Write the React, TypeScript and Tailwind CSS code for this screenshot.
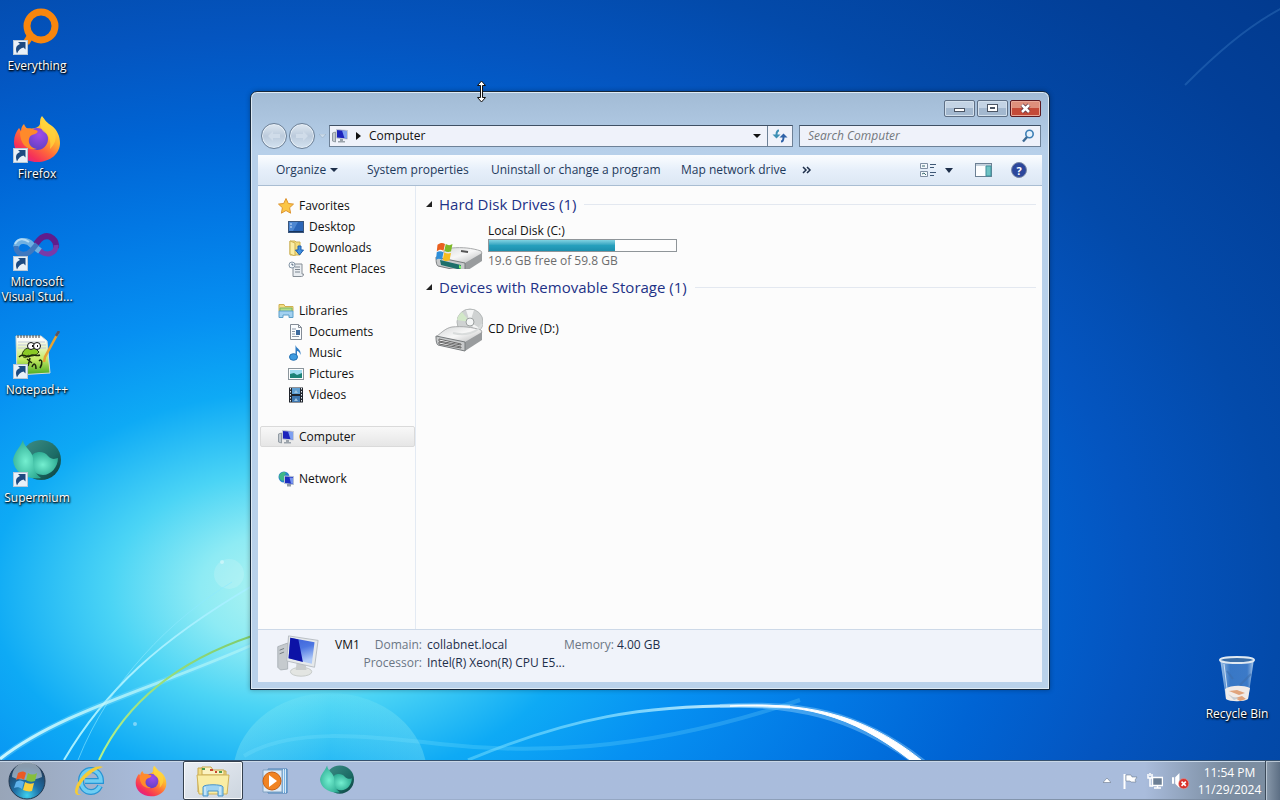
import type { ReactNode } from "react";

const Wallpaper = () => (
  <svg
    className="absolute inset-0 h-full w-full"
    viewBox="0 0 1280 760"
    preserveAspectRatio="xMidYMid slice"
    aria-hidden="true"
  >
    <defs>
      <radialGradient id="sky" gradientUnits="userSpaceOnUse" cx="0" cy="0" r="1" gradientTransform="translate(290 590) scale(1500 990)">
        <stop offset="0" stopColor="#b4f5f0" />
        <stop offset="0.06" stopColor="#8eebf4" />
        <stop offset="0.12" stopColor="#4bd4f5" />
        <stop offset="0.2" stopColor="#0eaaf5" />
        <stop offset="0.28" stopColor="#0690f2" />
        <stop offset="0.38" stopColor="#0278e4" />
        <stop offset="0.47" stopColor="#0064d4" />
        <stop offset="0.56" stopColor="#0455c0" />
        <stop offset="0.66" stopColor="#034aaa" />
        <stop offset="0.8" stopColor="#023f98" />
        <stop offset="1" stopColor="#023584" />
      </radialGradient>
      <linearGradient id="arcFade" x1="0" x2="1">
        <stop offset="0" stopColor="#6fdcff" stopOpacity="0.5" />
        <stop offset="0.5" stopColor="#8fe0ff" stopOpacity="0.8" />
        <stop offset="1" stopColor="#ffffff" />
      </linearGradient>
      <linearGradient id="stemFade" x1="0" x2="1">
        <stop offset="0" stopColor="#c9f6ff" />
        <stop offset="1" stopColor="#c9fff5" stopOpacity="0.4" />
      </linearGradient>
      <linearGradient id="green" x1="0" y1="1" x2="1" y2="0">
        <stop offset="0" stopColor="#b5f28a" />
        <stop offset="1" stopColor="#7fcb6c" />
      </linearGradient>
      <linearGradient id="bubble" x1="0" x2="1">
        <stop offset="0" stopColor="#b5faf2" stopOpacity="0.25" />
        <stop offset="0.5" stopColor="#b5faf2" stopOpacity="0.05" />
        <stop offset="1" stopColor="#b5faf2" stopOpacity="0.25" />
      </linearGradient>
    </defs>
    <rect width="1280" height="760" fill="url(#sky)" />
    <ellipse cx="330" cy="775" rx="97" ry="82" fill="url(#bubble)" />
    <circle cx="229" cy="574" r="15" fill="#fff" opacity="0.15" />
    <circle cx="222" cy="562" r="2" fill="#fff" opacity="0.4" />
    <circle cx="135" cy="724" r="2" fill="#fff" opacity="0.4" />
    <path d="M64 760C105 690 160 640 252 586" fill="none" stroke="#a6f0ff" strokeWidth="2" />
    <path d="M78 760C110 680 170 620 232 582" fill="none" stroke="#8deaff" strokeWidth="1" opacity="0.6" />
    <path d="M0 759C60 712 150 690 252 645" fill="none" stroke="#7fdfff" strokeWidth="6" opacity="0.35" />
    <path d="M0 759C60 712 150 690 252 645" fill="none" stroke="url(#stemFade)" strokeWidth="3" />
    <path d="M99 760C125 705 175 662 252 636" fill="none" stroke="url(#green)" strokeWidth="2" />
    <path d="M244 756C290 728 360 735 440 744S640 755 800 700" fill="none" stroke="#8ae6ff" strokeWidth="4" opacity="0.22" />
    <path d="M468 760C560 722 640 700 790 707" fill="none" stroke="url(#arcFade)" strokeWidth="3" />
    <path d="M720 706C790 704 850 715 914 762L922 760C860 712 800 700 720 706" fill="#9fdcff" stroke="#9fdcff" strokeWidth="4" opacity="0.4" />
    <path d="M730 706C800 703 850 713 910 760L921 760C860 711 800 702 730 706" fill="#fff" stroke="#fff" />
    <path d="M1185 85C1215 55 1245 28 1282 8" fill="none" stroke="#5aa0e0" strokeWidth="2" opacity="0.25" />
  </svg>
);

const ShortcutArrow = () => (
  <g>
    <rect x="0.5" y="33.5" width="14" height="14" fill="#e9f1f8" stroke="#b9c8d6" />
    <path d="M4 46.500c-2-5-1-8 3-9.500L5 35h7.500v7.500l-2-2c-3 .5-5 2.500-6.500 6z" fill="#1d4a80" />
  </g>
);

const EverythingArt = () => (
  <>
    <circle cx="28" cy="19" r="14" fill="none" stroke="#f8860d" strokeWidth="7" />
    <path d="M18 28l-5 8" stroke="#f8860d" strokeWidth="7" />
  </>
);

const FirefoxArt = () => (
  <>
    <defs>
      <linearGradient id="ffBody" x1="0.85" y1="0.05" x2="0.2" y2="0.95">
        <stop offset="0.05" stopColor="#ffe64a" />
        <stop offset="0.35" stopColor="#ffb12e" />
        <stop offset="0.6" stopColor="#ff6a3a" />
        <stop offset="0.85" stopColor="#f5305a" />
        <stop offset="1" stopColor="#e0218a" />
      </linearGradient>
      <radialGradient id="ffCore" cx="0.6" cy="0.3" r="0.8">
        <stop offset="0" stopColor="#a04be8" />
        <stop offset="1" stopColor="#5b3fc0" />
      </radialGradient>
    </defs>
    <path d="M29 1c3 4 5 7 10 10 5 4 8 10 8 17 0 11-10 19-23 19S1 38 1 27c0-6 2-10 5-14 1 1 1 2 2 3 0-3 1-5 3-7 1 3 3 5 6 5 4-1 9-1 10-5 0-3 0-6 2-8z" fill="url(#ffBody)" />
    <circle cx="24" cy="24" r="11" fill="url(#ffCore)" />
    <path d="M7 17c4-4 10-5 15-2 4 0 3 3 0 4-4 1-5 2-6 5-1 5 2 9 8 10-9 2-17-4-17-17z" fill="#ff8a2b" />
    <path d="M30 3c4 6 9 9 12 15 2 7-1 12-5 16 1-7 0-13-6-17-4-3-4-9-1-14z" fill="#ffd43c" opacity="0.75" />
  </>
);

const VisualStudioArt = () => (
  <g transform="translate(0 7)">
    <path d="M20 18c4-4 5-9 10-11 7-3 14 3 13 11" fill="none" stroke="#5f1d8c" strokeWidth="6" />
    <path d="M43 15c1 9-10 12-17 5" fill="none" stroke="#7a3aa8" strokeWidth="5" />
    <path d="M3 17c1-7 11-8 16-2l8 6" fill="none" stroke="#6fb0e2" strokeWidth="6" />
    <path d="M3 16c0 9 10 11 16 4l5-6" fill="none" stroke="#3f78bf" strokeWidth="5" />
    <path d="M2 14c3-6 9-6 14-2" fill="none" stroke="#b5dcf4" strokeWidth="2" />
  </g>
);

const NotepadArt = () => (
  <>
    <defs>
      <linearGradient id="npPage" x1="0" y1="0" x2="0" y2="1">
        <stop offset="0.1" stopColor="#fdfdfa" />
        <stop offset="0.6" stopColor="#c5ea62" />
        <stop offset="1" stopColor="#46a820" />
      </linearGradient>
    </defs>
    <path d="M3 5h25l6 5 3 32-33 2z" fill="url(#npPage)" stroke="#d9ddd6" />
    <path d="M5 4v3M8 4v3M11 4v3M14 4v3M17 4v3M20 4v3M23 4v3M26 4v3" stroke="#444" />
    <path d="M5 11h27M5 14h28M5 17h28" stroke="#c3c9d8" strokeWidth="1" />
    <path d="M9 24c1-7 8-9 14-6l3 3c-3 4-8 5-11 3-1 3-4 4-6 0z" fill="#8ac926" stroke="#263a0c" strokeWidth="1" />
    <circle cx="18" cy="15" r="3.500" fill="#fff" stroke="#111" />
    <circle cx="24" cy="15" r="3.500" fill="#fff" stroke="#111" />
    <path d="M19 15h1M24 15h1" stroke="#111" strokeWidth="2" />
    <path d="M6 26c5-5 8 2 11-1s6 1 10-1M14 28l5 4m-2-5l-2 8M19 36c2-5 4-3 4 2m3-8c3-3 4 2 1 7" fill="none" stroke="#1c280b" strokeWidth="1.500" />
    <path d="M45 2L32 26l-1 5" stroke="#e8a332" strokeWidth="2.500" fill="none" />
    <path d="M46 0l-3 5" stroke="#5b5560" strokeWidth="2.500" />
  </>
);

const SupermiumArt = () => (
  <>
    <defs>
      <radialGradient id="smBall" cx="0.45" cy="0.55" r="0.6">
        <stop offset="0" stopColor="#74efd0" />
        <stop offset="1" stopColor="#2aa890" />
      </radialGradient>
      <linearGradient id="smRing" x1="0" y1="0" x2="1" y2="1">
        <stop offset="0" stopColor="#3f8f88" />
        <stop offset="0.6" stopColor="#1c6c66" />
        <stop offset="1" stopColor="#0b3b3a" />
      </linearGradient>
    </defs>
    <circle cx="28" cy="21" r="20" fill="url(#smRing)" />
    <path d="M18 19c1-7 13-8 17-2 4 4 7 3 10 2 0 9-7 17-15 17-10 0-14-9-12-17z" fill="url(#smBall)" />
    <path d="M10 1c1 8 9 10 10 18 0 8 1 15 8 20C13 41 1 33 0 21c1-8 7-12 10-20z" fill="url(#smBall)" />
  </>
);

const RecycleBinArt = () => (
  <>
    <defs>
      <linearGradient id="binGlass" x1="0" x2="1">
        <stop offset="0" stopColor="#c3dcf2" stopOpacity="0.85" />
        <stop offset="0.3" stopColor="#5c94d4" stopOpacity="0.6" />
        <stop offset="0.8" stopColor="#6a9fdc" stopOpacity="0.55" />
        <stop offset="1" stopColor="#d5e8f8" stopOpacity="0.85" />
      </linearGradient>
    </defs>
    <path d="M7 4l6 40c4 3 18 3 22 0l6-40z" fill="url(#binGlass)" />
    <path d="M12 34c6-4 18-4 25-1l-2 11c-4 3-18 3-22 0z" fill="#f1ebe8" />
    <path d="M16 36l8-1 8 3-6 2zM22 43l7-2 4 3-6 2z" fill="#e0a37c" />
    <path d="M15 39l5 3 6 1-5 2z" fill="#c7ccd2" />
    <ellipse cx="24" cy="5" rx="17" ry="3" fill="#3a6da6" stroke="#dfe9f2" strokeWidth="2" />
    <path d="M38 19L27 30M14 16l6 8" stroke="#3d6fae" opacity="0.6" strokeWidth="2" />
    <path d="M11 9l4 33" stroke="#e6f1fb" opacity="0.8" />
  </>
);

const MonitorArt = () => (
  <>
    <defs>
      <linearGradient id="screen" x1="0" y1="0" x2="0.3" y2="1">
        <stop offset="0" stopColor="#3c5fd8" />
        <stop offset="0.5" stopColor="#4c76e2" />
        <stop offset="1" stopColor="#b0caf7" />
      </linearGradient>
    </defs>
    <path d="M2 13l11-4v29l-8 1-3-3z" fill="#c5cace" stroke="#a9b0b5" />
    <path d="M4 17l5-2M4 21l5-2" stroke="#6b7379" />
    <ellipse cx="28" cy="41" rx="12" ry="5" fill="#e3e5e2" stroke="#c4c8c6" />
    <path d="M23 31h10l1 8H22z" fill="#c9cccc" />
    <path d="M14 1l33 5-4 30-31-7z" fill="#e6e9eb" stroke="#b4babf" />
    <path d="M16 3l27 5-3 24-26-6z" fill="url(#screen)" />
    <path d="M16 3l9 2 5 25-16-4z" fill="#0c12a6" />
  </>
);

const DriveBody = () => (
  <>
    <defs>
      <linearGradient id="driveTop" x1="0" y1="0" x2="1" y2="1">
        <stop offset="0" stopColor="#d4d6d7" />
        <stop offset="0.5" stopColor="#f7f7f7" />
        <stop offset="1" stopColor="#b2b4b5" />
      </linearGradient>
    </defs>
    <path d="M1 32c6-5 10-9 16-10 10-1 20 0 29 3 1 1 1 3 0 4L30 38z" fill="url(#driveTop)" stroke="#a9abac" />
    <path d="M30 37l17-10v8L30 46z" fill="#999c9e" />
    <path d="M1 31l29 6v9L3 40c-2-1-2-7-2-9z" fill="#c8cacb" stroke="#777b7d" />
  </>
);

const HardDiskArt = () => (
  <>
    <DriveBody />
    <path d="M5 34l21 5v5L6 39z" fill="#1d6f6a" />
    <path d="M24 39l2 1v3l-2-1z" fill="#7cf06a" />
    <path d="M26 25l7 1" stroke="#555" strokeWidth="2" />
    <g transform="translate(1 12) scale(.75)">
      <path d="M2 9c4-3 7-3 10-1l-2 9c-3-2-6-2-9 1z" fill="#e9601f" />
      <path d="M13 8c3 2 6 2 9 0l-2 10c-3 1-6 1-9-1z" fill="#7eb928" />
      <path d="M1 19c3-2 6-2 9 0l-2 10c-3-2-5-2-8 0z" fill="#2f8fd8" />
      <path d="M11 19c3 2 6 2 9 1l-2 10c-4 1-6 1-9-1z" fill="#f6bc20" />
    </g>
  </>
);

const CdDriveArt = () => (
  <>
    <circle cx="35" cy="17" r="13" fill="#cfd2d2" stroke="#b4b8b8" />
    <path d="M35 17L27 7a13 13 0 0 0-5 8z" fill="#d2e8c8" />
    <path d="M35 17L31 5h8zM35 17l6 11 5-4z" fill="#f3f4f4" />
    <circle cx="35" cy="17" r="4" fill="#f4f6f6" stroke="#9da1a1" />
    <DriveBody />
    <path d="M4 34l22 5v1L4 36zM4 37l22 5v1L4 39z" fill="#fff" stroke="#666" strokeWidth="1" />
    <path d="M18 28c12 3 25 0 29-9" fill="none" stroke="#d9dcdc" strokeWidth="2" />
  </>
);

type IconProps = { size?: number; box?: string; children: ReactNode };

const Icon = ({ size = 16, box = "0 0 16 16", children }: IconProps) => (
  <svg width={size} height={size} viewBox={box} aria-hidden="true" className="shrink-0">
    {children}
  </svg>
);

const smallIcons: Record<string, ReactNode> = {
  Favorites: (
    <path d="M8 .5l2.300 5 5.200.6-3.900 3.600 1 5.500L8 12.500l-4.600 2.700 1-5.500L.5 6.100l5.200-.6z" fill="#fbc646" stroke="#dd9430" />
  ),
  Desktop: (
    <>
      <rect x="0.5" y="2.5" width="15" height="11" fill="#2b66b8" stroke="#3a567c" />
      <path d="M1 3h9L5 12H1z" fill="#5c95dc" opacity="0.7" />
      <path d="M2 5h2M2 8h2" stroke="#cfe3fa" />
      <path d="M1 12.500h14" stroke="#16345e" />
    </>
  ),
  Downloads: (
    <>
      <path d="M2 1h5l1 1h4v13H2z" fill="#f2dc7c" stroke="#cdb154" />
      <path d="M2 1l5 2v13l-5-2z" fill="#fbeea6" stroke="#cdb154" />
      <path d="M10 6h3v4h2.500l-4 5-4-5H10z" fill="#3f8fe0" stroke="#1f5fae" />
    </>
  ),
  "Recent Places": (
    <>
      <path d="M4 3h10v10h1.500c0 2-1 2.500-2 2.500H5V6H1.500C1 4 2 3 4 3z" fill="#e9edf1" stroke="#868e96" />
      <path d="M7 6h5M7 8.500h5M7 11h5" stroke="#7d8791" />
      <circle cx="4" cy="4" r="3" fill="#f4f8fb" stroke="#8798a8" />
      <path d="M4 2.500V4h1.500" fill="none" stroke="#4b6176" />
    </>
  ),
  Libraries: (
    <>
      <path d="M1 1.500h5l1 2h8V8H1z" fill="#f3dd83" stroke="#cfb050" />
      <path d="M2 5h12v4H2z" fill="#b4df8a" stroke="#7fb563" />
      <path d="M1 8h14v6.500h-4V12H5v2.500H1z" fill="#a3d1f0" stroke="#5c9fc9" />
    </>
  ),
  Documents: (
    <>
      <path d="M2.500.5h8l3 3v12h-11z" fill="#fafcfe" stroke="#848c96" />
      <path d="M10.500.5v3h3" fill="none" stroke="#848c96" />
      <path d="M4 5h4M4 7.500h3M4 10h3M4 12.500h7" stroke="#8b98a8" />
      <rect x="8" y="6" width="4" height="5" fill="#3c6a9e" />
    </>
  ),
  Music: (
    <>
      <path d="M7.500 0c1 4 6 4 5 10-1-3-2-4-3.500-4v6H7.500z" fill="#2f7cc4" />
      <ellipse cx="5.500" cy="12" rx="4" ry="3.300" fill="#3c9ae0" stroke="#2270b2" />
    </>
  ),
  Pictures: (
    <>
      <rect x="0.5" y="2.500" width="15" height="11" fill="#fbfdfd" stroke="#8b959c" />
      <rect x="2" y="4" width="12" height="8" fill="#9fdcf0" />
      <path d="M2 8l4-1 3 2 5-2v5H2z" fill="#1d8377" />
    </>
  ),
  Videos: (
    <>
      <rect x="1" y="0.500" width="14" height="15" fill="#20252c" />
      <path d="M2.500 1v14M13.500 1v14" stroke="#e3e9ee" strokeWidth="1" strokeDasharray="1.500 1.500" />
      <rect x="4" y="1" width="8" height="6" fill="#5f9fd2" />
      <rect x="4" y="9" width="8" height="6" fill="#3e77b0" />
      <path d="M6 6l2-3 2 3M6 14l2-3 2 3" fill="#9cc4e0" />
    </>
  ),
  Computer: (
    <>
      <path d="M.5 5l3-1v10l-3-1z" fill="#c3cad0" stroke="#929ba3" />
      <path d="M4.500 1.500l11 1v8.500l-11-1z" fill="#1c23bc" stroke="#c6ccd4" />
      <path d="M10 2.500l5 .5v7.500l-2.500-.3z" fill="#7d9ff0" />
      <path d="M8 11h3v2h2v1.500H6V13h2z" fill="#9ba3ab" />
    </>
  ),
  Network: (
    <>
      <circle cx="6" cy="6" r="5.500" fill="#2583c8" />
      <path d="M2 3c3-3 5-2 6-1L6 5l2 2-3 3C2 9 0 6 2 3z" fill="#3fb787" />
      <path d="M6.500 5l9 .5v8l-9-1z" fill="#1c2dc0" stroke="#b9c3d2" />
      <path d="M11.500 6.500l3.500.2v6l-2-.2z" fill="#7795ee" />
      <path d="M9 13h4v2.500H9z" fill="#8f9aa8" />
    </>
  ),
};

const desktopIcons = [
  { name: "Everything", lines: ["Everything"], art: <EverythingArt /> },
  { name: "Firefox", lines: ["Firefox"], art: <FirefoxArt /> },
  { name: "Visual Studio", lines: ["Microsoft", "Visual Stud..."], art: <VisualStudioArt /> },
  { name: "Notepad++", lines: ["Notepad++"], art: <NotepadArt /> },
  { name: "Supermium", lines: ["Supermium"], art: <SupermiumArt /> },
];

const navGroups = [
  { title: "Favorites", items: ["Desktop", "Downloads", "Recent Places"] },
  { title: "Libraries", items: ["Documents", "Music", "Pictures", "Videos"] },
  { title: "Computer", items: [] },
  { title: "Network", items: [] },
];

function DesktopIcon({ lines, art, shortcut = true }: { lines: string[]; art: ReactNode; shortcut?: boolean }) {
  return (
    <button className="flex h-[108px] w-[74px] flex-col items-center pt-[7px] text-white">
      <Icon size={48} box="0 0 48 48">
        {art}
        {shortcut && <ShortcutArrow />}
      </Icon>
      <span className="mt-[3px] flex flex-col items-center whitespace-nowrap text-[12px] leading-[15px] [text-shadow:1px_1px_2px_#000,0_1px_2px_#000]">
        {lines.map((line) => (
          <span key={line}>{line}</span>
        ))}
      </span>
    </button>
  );
}

const captionButton =
  "flex h-[17px] w-[31px] items-center justify-center rounded-[2px] border border-[#5f7086] bg-linear-to-b from-[#c3d3e4] from-50% to-[#a3b8cf] to-50% shadow-[inset_0_0_0_1px_#d3e0ec]";

function TitleBar() {
  return (
    <div className="flex justify-end gap-[2px] pr-[1px]">
      <button className={captionButton} aria-label="Minimize">
        <svg width="13" height="11" viewBox="0 0 13 11">
          <rect x="1.500" y="5.500" width="10" height="3" fill="#fff" stroke="#4b5564" />
        </svg>
      </button>
      <button className={captionButton} aria-label="Maximize">
        <svg width="13" height="11" viewBox="0 0 13 11">
          <rect x="1.500" y="1.500" width="10" height="7" fill="#fff" stroke="#4b5564" />
          <rect x="4.500" y="4.500" width="4" height="1" fill="#9fb3c8" stroke="#4b5564" />
        </svg>
      </button>
      <button
        className="flex h-[17px] w-[31px] items-center justify-center rounded-[2px] border border-[#5c1a22] bg-linear-to-b from-[#de8f7c] from-50% to-[#c44a38] to-50% shadow-[inset_0_0_0_1px_#e8a898]"
        aria-label="Close"
      >
        <svg width="13" height="11" viewBox="0 0 13 11">
          <path d="M3 2l7 7M10 2L3 9" stroke="#5c3340" strokeWidth="4" />
          <path d="M3 2l7 7M10 2L3 9" stroke="#fff" strokeWidth="2.500" />
        </svg>
      </button>
    </div>
  );
}

const roundButton =
  "size-[26px] rounded-full border border-[#6b7f96] bg-linear-to-b from-[#dfe8f1] via-[#bccbdc] to-[#d3e2f0] shadow-[inset_0_0_0_1px_#e8f0f7]";

function AddressRow() {
  return (
    <div className="flex h-[22px] items-center pr-[1px]">
      <div className="flex gap-[2px] pl-[3px]">
        <button className={roundButton} aria-label="Back" disabled>
          <svg width="24" height="24" viewBox="0 0 24 24">
            <path d="M11 7l-5 5 5 5v-3h7v-4h-7z" fill="#d0dce9" />
          </svg>
        </button>
        <button className={roundButton} aria-label="Forward" disabled>
          <svg width="24" height="24" viewBox="0 0 24 24">
            <path d="M13 7l5 5-5 5v-3H6v-4h7z" fill="#d0dce9" />
          </svg>
        </button>
      </div>
      <button className="flex w-[14px] justify-center" aria-label="Recent pages">
        <svg width="7" height="4" viewBox="0 0 7 4">
          <path d="M0 0h7L3.500 4z" fill="#cbdbea" stroke="#93a9bf" strokeWidth="0.5" />
        </svg>
      </button>
      <div className="flex h-full min-w-0 flex-1 border border-[#6d8197] border-t-[#3f5064] bg-[#eff2fa]">
        <div className="flex min-w-0 flex-1 items-center pl-[2px]">
          <Icon>{smallIcons.Computer}</Icon>
          <svg width="5" height="8" viewBox="0 0 5 8" className="mx-2">
            <path d="M0 0l5 4-5 4z" fill="#111" />
          </svg>
          <button className="text-[12px] text-[#111]">Computer</button>
          <button className="mr-[6px] ml-auto" aria-label="Previous locations">
            <svg width="8" height="4" viewBox="0 0 8 4">
              <path d="M0 0h8L4 4z" fill="#111" />
            </svg>
          </button>
        </div>
        <button className="flex w-[25px] items-center justify-center border-l border-[#6d8197]" aria-label="Refresh">
          <svg width="16" height="14" viewBox="0 0 16 14">
            <path d="M7 1.500C5 1.500 4.500 3 4.500 6" fill="none" stroke="#3d8fb4" strokeWidth="2" />
            <path d="M.5 5.500h8l-4 4z" fill="#3d8fb4" />
            <path d="M9 12.500c2 0 2.500-1.500 2.500-4.500" fill="none" stroke="#2f62a8" strokeWidth="2" />
            <path d="M7.500 8.500h8l-4-4z" fill="#2f62a8" />
          </svg>
        </button>
      </div>
      <label className="ml-[6px] flex h-full w-[242px] items-center border border-[#6d8197] border-t-[#3f5064] bg-[#eff2fa] pr-[5px] pl-2">
        <input
          type="text"
          aria-label="Search Computer"
          placeholder="Search Computer"
          className="min-w-0 flex-1 bg-transparent text-[12px] italic outline-none placeholder:text-[#73777d]"
        />
        <svg width="14" height="14" viewBox="0 0 14 14">
          <circle cx="8.500" cy="5" r="3.700" fill="#e6f2fc" stroke="#3d7fb5" strokeWidth="1.600" />
          <path d="M6 8l-4 4.500" stroke="#3d6a94" strokeWidth="2.400" />
        </svg>
      </label>
    </div>
  );
}

function Toolbar() {
  return (
    <div className="flex h-[31px] items-center border-b border-[#a9bdd2] bg-linear-to-b from-[#fbfdff] via-[#e6effa] to-[#dce7f4] pr-[15px] pl-[18px] text-[12px] whitespace-nowrap text-[#1e395b]">
      <button className="flex w-[91px] items-center gap-1">
        Organize
        <svg width="8" height="4" viewBox="0 0 8 4">
          <path d="M0 0h8L4 4z" fill="#1e2f4a" />
        </svg>
      </button>
      <button className="w-[124px] text-left">System properties</button>
      <button className="w-[190px] text-left">Uninstall or change a program</button>
      <button className="w-[121px] text-left">Map network drive</button>
      <button aria-label="More commands">
        <svg width="10" height="8" viewBox="0 0 10 8">
          <path d="M1 1l3 3-3 3M5 1l3 3-3 3" fill="none" stroke="#1e2f4a" strokeWidth="1.500" />
        </svg>
      </button>
      <div className="ml-auto flex items-center">
        <button aria-label="Change your view">
          <svg width="17" height="16" viewBox="0 0 17 16">
            <path d="M.5 1.500h7v5h-7zM.5 9.500h7v5h-7z" fill="#f4f8fc" stroke="#7f8fa3" />
            <path d="M2 4h3M2 12l2-1 2 2" fill="none" stroke="#3a6b6f" />
            <path d="M10 2.500h6M10 5.500h4M10 10.500h6M10 13.500h4" stroke="#3f5876" />
          </svg>
        </button>
        <button className="ml-2 w-[9px]" aria-label="More options">
          <svg width="8" height="5" viewBox="0 0 8 5">
            <path d="M0 0h8L4 5z" fill="#1e2f4a" />
          </svg>
        </button>
        <button className="ml-[21px]" aria-label="Show the preview pane">
          <svg width="17" height="16" viewBox="0 0 17 16">
            <rect x="0.500" y="1.500" width="16" height="13" fill="#fdfeff" stroke="#6c8094" />
            <path d="M1 3h15" stroke="#8ba3ba" />
            <path d="M11 4h5v10h-5z" fill="#6fc3c4" stroke="#3e8f9c" />
          </svg>
        </button>
        <button className="ml-[19px]" aria-label="Help">
          <span className="flex size-4 items-center justify-center rounded-full border border-[#7d8aa6] bg-[#2c479c] text-[11px] leading-none font-bold text-white">
            ?
          </span>
        </button>
      </div>
    </div>
  );
}

function NavPane() {
  return (
    <nav className="flex w-[158px] shrink-0 flex-col gap-[21px] border-r border-[#e3eaf3] py-[9px] text-[12px] text-[#111]">
      {navGroups.map((group) => (
        <div key={group.title}>
          <a
            href="#"
            className={
              group.title === "Computer"
                ? "ml-[2px] flex h-[21px] items-center gap-[5px] rounded-[2px] border border-[#dadada] bg-linear-to-b from-[#f8f8f8] to-[#e6e6e6] pl-[17px]"
                : "flex h-[21px] items-center gap-[5px] pl-[20px]"
            }
          >
            <Icon>{smallIcons[group.title]}</Icon>
            {group.title}
          </a>
          {group.items.map((item) => (
            <a key={item} href="#" className="flex h-[21px] items-center gap-[5px] pl-[30px]">
              <Icon>{smallIcons[item]}</Icon>
              {item}
            </a>
          ))}
        </div>
      ))}
    </nav>
  );
}

function GroupHeader({ title }: { title: string }) {
  return (
    <h2 className="flex h-5 items-center text-[15px] whitespace-nowrap text-[#1e3287]">
      <svg width="7" height="7" viewBox="0 0 7 7" className="mr-[6px]">
        <path d="M6 0v6H0z" fill="#222" />
      </svg>
      {title}
      <span className="ml-2 h-px flex-1 bg-[#e3e8f0]" />
    </h2>
  );
}

function Drives() {
  return (
    <main className="min-w-0 flex-1 pt-2 pr-[6px] pl-[10px]">
      <GroupHeader title="Hard Disk Drives (1)" />
      <button className="mt-[6px] flex h-[50px] items-center gap-[5px] pl-[9px] text-left">
        <Icon size={48} box="0 -5 48 48">
          <HardDiskArt />
        </Icon>
        <span className="flex flex-col text-[12px] leading-[17px] text-[#111]">
          <span>Local Disk (C:)</span>
          <span className="h-[13px] w-[189px] border border-[#8f9599] bg-[#fdfdfd]">
            <span
              className="block h-full bg-linear-to-b from-[#7fd3e2] via-[#26a0bd] to-[#1d8fae]"
              style={{ width: `${((59.8 - 19.6) / 59.8) * 100}%` }}
            />
          </span>
          <span className="text-[#6d6d6d]">19.6 GB free of 59.8 GB</span>
        </span>
      </button>
      <div className="mt-[7px]">
        <GroupHeader title="Devices with Removable Storage (1)" />
      </div>
      <button className="mt-[7px] flex h-[50px] items-center gap-[5px] pl-[9px] text-left">
        <Icon size={48} box="0 0 48 48">
          <CdDriveArt />
        </Icon>
        <span className="text-[12px] text-[#111]">CD Drive (D:)</span>
      </button>
    </main>
  );
}

function DetailsPane() {
  return (
    <footer className="flex h-[53px] items-start border-t border-[#cdd9e8] bg-[#f0f3fa] pl-[18px] text-[12px] leading-[18px] whitespace-nowrap text-[#1e2f4a]">
      <div className="pt-[5px]">
        <Icon size={43} box="0 0 48 48">
          <MonitorArt />
        </Icon>
      </div>
      <div className="grid grid-cols-[28px_54px_132px_auto] gap-x-[5px] pt-[6px] pl-4">
        <span className="text-[#111]">VM1</span>
        <span className="text-right text-[#6b7684]">Domain:</span>
        <span>collabnet.local</span>
        <span>
          <span className="mr-[3px] text-[#6b7684]">Memory:</span>4.00 GB
        </span>
        <span className="col-start-2 flex justify-end text-[#6b7684]">Processor:</span>
        <span>Intel(R) Xeon(R) CPU E5...</span>
      </div>
    </footer>
  );
}

function ExplorerWindow() {
  return (
    <section
      aria-label="Computer"
      className="absolute top-[91px] right-[230px] bottom-[70px] left-[250px] flex flex-col gap-2 rounded-t-[7px] border border-[#16283c] bg-linear-to-b from-[#a2bbd5] via-[#b7d0ea] via-10% to-[#b9d1ea] px-[7px] pt-2 pb-[7px] shadow-[inset_0_0_0_1px_#dfebf5,0_0_5px_rgba(0,0,0,0.3)]"
    >
      <TitleBar />
      <AddressRow />
      <div className="flex min-h-0 flex-1 flex-col">
        <Toolbar />
        <div className="flex min-h-0 flex-1 bg-[#fcfcfc]">
          <NavPane />
          <Drives />
        </div>
        <DetailsPane />
      </div>
    </section>
  );
}

const StartOrb = () => (
  <Icon size={38} box="0 0 38 38">
    <defs>
      <radialGradient id="orb" cx="0.5" cy="0.9" r="0.8">
        <stop offset="0" stopColor="#3fd0ee" />
        <stop offset="0.45" stopColor="#1f6fa6" />
        <stop offset="1" stopColor="#1f3d5e" />
      </radialGradient>
    </defs>
    <circle cx="19" cy="19" r="18" fill="url(#orb)" stroke="#24384f" />
    <path d="M4 15a15 15 0 0 1 30 0c-8 4-22 4-30 0z" fill="#dfe8ef" opacity="0.55" />
    <path d="M10 11c3-2 6-2 8 0l-2 7c-2-2-5-2-8 0z" fill="#ea5a25" />
    <path d="M20 11c3 2 6 2 9 0l-2 8c-3 1-6 1-9-1z" fill="#86bf3c" />
    <path d="M8 20c3-2 5-2 8 0l-2 7c-3-2-5-2-8-1z" fill="#5fb2ec" />
    <path d="M17 20c3 2 6 2 9 1l-2 8c-3 1-6 0-9-1z" fill="#fbcf3a" />
  </Icon>
);

const InternetExplorer = () => (
  <Icon size={34} box="0 0 34 34">
    <path d="M28 22c-2 4-5 6-9 6-6 0-10-5-10-11S13 6 19 6s10 5 10 11H13" fill="none" stroke="#2794d4" strokeWidth="6" />
    <path d="M28 22c-2 4-5 6-9 6-6 0-10-5-10-11S13 6 19 6s10 5 10 11H13" fill="none" stroke="#6fcdf2" strokeWidth="3.500" />
    <path d="M31 3C23-1 5 13 3 27c0 4 3 5 7 3-4 1-5-1-4-4C9 16 21 6 31 3z" fill="#f5cc36" />
  </Icon>
);

const FolderStack = () => (
  <Icon size={36} box="0 0 36 36">
    <path d="M3 5h10l2 3h16v21H3z" fill="#f1dd86" stroke="#c8a84a" />
    <path d="M7 4h9l2 3h11v5H7z" fill="#fbf3c2" stroke="#c8a84a" />
    <path d="M7 6h3M24 9h3" stroke="#4b9b4c" strokeWidth="2" />
    <path d="M15 7h3M20 9h2" stroke="#c9462f" strokeWidth="2" />
    <path d="M2 12h32l-2 19H4z" fill="#f9eda4" stroke="#cfb158" />
    <path d="M8 33v-9c0-3 20-3 20 0v9h-5v-5H13v5z" fill="#9fd3f2" stroke="#4a95c9" />
    <path d="M10 32v-8M25 24v8" stroke="#e9f6fd" />
  </Icon>
);

const MediaPlayer = () => (
  <Icon size={30} box="0 0 30 30">
    <path d="M8 3h19v24H8z" fill="#7fb5e3" stroke="#477fb4" />
    <path d="M23.500 3v24M25.500 3v24" stroke="#d8ebf9" />
    <path d="M3 4h19v22H3z" fill="#dceaf6" stroke="#7fa1c2" />
    <circle cx="12" cy="15" r="9" fill="#f08322" stroke="#c75e12" />
    <path d="M9 9l8 6-8 6z" fill="#fff" />
  </Icon>
);

const taskButtons = [
  { name: "Internet Explorer", icon: <InternetExplorer /> },
  { name: "Firefox", icon: <Icon size={32} box="0 0 48 48"><FirefoxArt /></Icon> },
  { name: "Windows Explorer", icon: <FolderStack />, active: true },
  { name: "Windows Media Player", icon: <MediaPlayer /> },
  { name: "Supermium", icon: <Icon size={34} box="0 -1 48 48"><SupermiumArt /></Icon> },
];

function Tray() {
  return (
    <div className="ml-auto flex h-full items-center text-white">
      <button aria-label="Show hidden icons" className="mr-[11px]">
        <svg width="8" height="5" viewBox="0 0 8 5">
          <path d="M0 4.500h8L4 0z" fill="#fff" stroke="#56657a" strokeWidth="0.500" />
        </svg>
      </button>
      <div className="mr-[5px] flex items-center gap-[9px]">
        <button aria-label="Action Center">
          <Icon>
            <path d="M2.500 1v15" stroke="#fff" strokeWidth="2" />
            <path d="M4 2h5l1 2h5l-2 3 1 2H9L8 8H4z" fill="#fff" stroke="#5b6a7c" strokeWidth="0.500" />
          </Icon>
        </button>
        <button aria-label="Network">
          <Icon>
            <path d="M5.500 4.500h10v8h-10z" fill="#6c7f95" stroke="#fff" strokeWidth="1.500" />
            <path d="M7 15h7M10.500 12v3M1 1v4h4V1M3 5v8h3M3 0v3" fill="none" stroke="#fff" strokeWidth="1.500" />
          </Icon>
        </button>
        <button aria-label="Volume muted">
          <Icon size={17}>
            <path d="M0 5h2v6H0zM3 5l4-4v14l-4-4z" fill="#fff" />
            <circle cx="11" cy="11" r="4.800" fill="#d8322c" stroke="#f0a09b" strokeWidth="0.500" />
            <path d="M9 9l4 4M13 9l-4 4" stroke="#fff" strokeWidth="1.500" />
          </Icon>
        </button>
      </div>
      <button className="w-[71px] text-center text-[12px] leading-[17px] whitespace-nowrap">
        11:54 PM
        <br />
        11/29/2024
      </button>
      <button
        aria-label="Show desktop"
        className="h-full w-[15px] border-l border-[#3c4a5a] bg-linear-to-r from-[#8999ab] to-[#5d6f84] shadow-[inset_1px_1px_0_#b9c6d4]"
      />
    </div>
  );
}

function Taskbar() {
  return (
    <div className="relative flex h-10 shrink-0 items-center border-t border-[#35506e] bg-linear-to-r from-[#98a5b8] via-[#a9bcdc] via-12% to-[#78899e] shadow-[inset_0_1px_0_#c9d8e8]">
      <div className="absolute inset-y-px right-0 left-[12%] bg-linear-to-r from-[#a9bcdc] from-88% to-[#7b8da1] to-95%" />
      <div className="relative flex h-full flex-1 items-center">
        <button aria-label="Start" className="ml-2">
          <StartOrb />
        </button>
        <div className="ml-[13px] flex h-full gap-[2px]">
          {taskButtons.map((task) => (
            <button
              key={task.name}
              aria-label={task.name}
              className={
                task.active
                  ? "flex w-[60px] items-center justify-center rounded-[2px] border border-[#34404e] bg-linear-to-br from-[#e9edf3] to-[#ccd5df] shadow-[inset_0_0_0_1px_#f7f9fb]"
                  : "flex w-[60px] items-center justify-center"
              }
            >
              {task.icon}
            </button>
          ))}
        </div>
        <Tray />
      </div>
    </div>
  );
}

export default function App() {
  return (
    <div className="flex h-screen min-h-[600px] flex-col overflow-hidden font-['Open_Sans','Noto_Sans',sans-serif]">
      <div className="relative min-h-0 flex-1">
        <Wallpaper />
        <div className="relative flex h-full items-start justify-between pr-[6px]">
          <div className="flex flex-col">
            {desktopIcons.map((icon) => (
              <DesktopIcon key={icon.name} lines={icon.lines} art={icon.art} />
            ))}
          </div>
          <div className="self-end pb-1">
            <DesktopIcon lines={["Recycle Bin"]} art={<RecycleBinArt />} shortcut={false} />
          </div>
        </div>
        <ExplorerWindow />
        {/* resize pointer resting on the window's top edge */}
        <svg className="absolute top-[80px] left-[476px]" width="11" height="23" viewBox="0 0 11 23" aria-hidden="true">
          <path d="M5.500 1l4 4.500h-3v12h3l-4 4.500-4-4.500h3v-12h-3z" fill="#fff" stroke="#111" />
        </svg>
      </div>
      <Taskbar />
    </div>
  );
}
